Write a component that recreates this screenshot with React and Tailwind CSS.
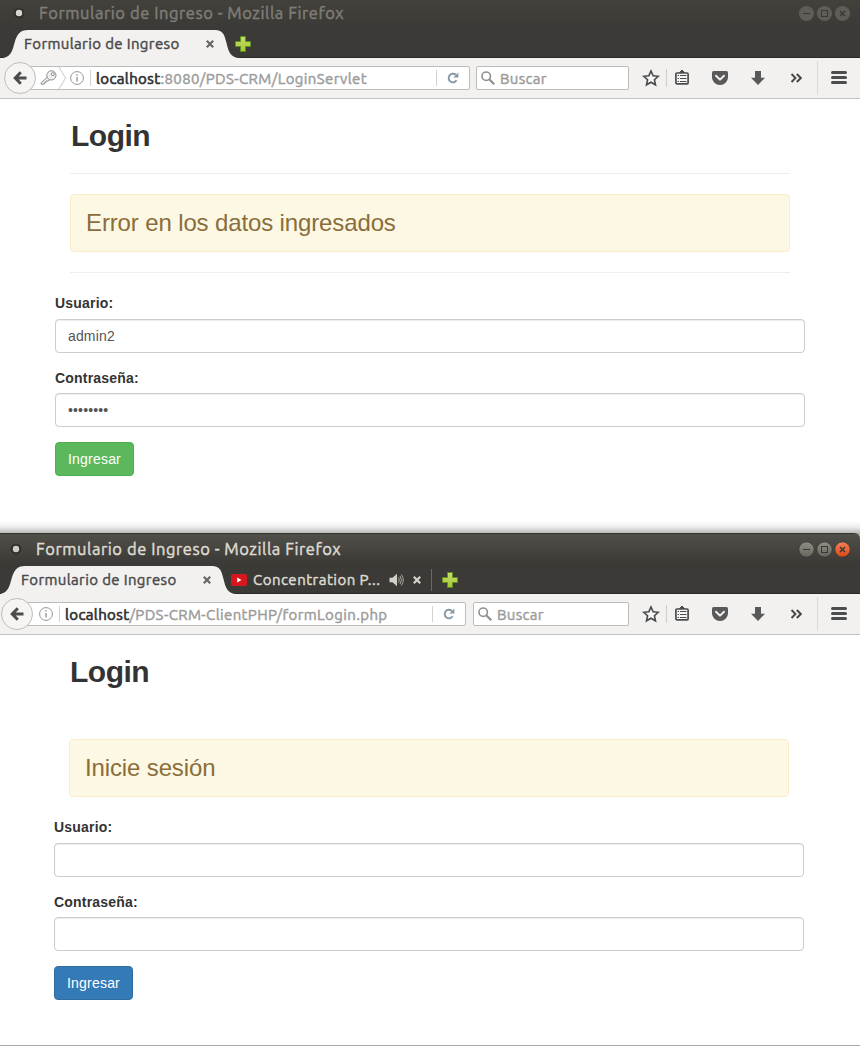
import React from "react";

const UI = "font-['Ubuntu','Noto_Sans',sans-serif]";
const MEDIUM = "[-webkit-text-stroke:0.45px]";

function Fit({ children, className, width }) {
  return (
    <span className={`block shrink-0 overflow-visible whitespace-nowrap ${className}`} style={{ width }}>
      {children}
    </span>
  );
}

function WindowButtons({ active }) {
  const fill = active ? "url(#btnGray)" : "#5f5d57";
  return (
    <svg width="54" height="20" viewBox="0 0 54 20" className="shrink-0">
      <defs>
        <linearGradient id="btnGray" x1="0" y1="0" x2="0" y2="1">
          <stop offset="0" stopColor="#918f85" />
          <stop offset="1" stopColor="#66645c" />
        </linearGradient>
        <linearGradient id="btnRed" x1="0" y1="0" x2="0" y2="1">
          <stop offset="0" stopColor="#f4805a" />
          <stop offset="1" stopColor="#dd4814" />
        </linearGradient>
      </defs>
      <g stroke={active ? "#33322e" : "none"} strokeWidth="0.6">
        <circle cx="8.5" cy="10.5" r="7.6" fill={fill} />
        <circle cx="26.5" cy="10.5" r="7.6" fill={fill} />
        <circle cx="44.5" cy="10.5" r="7.6" fill={active ? "url(#btnRed)" : fill} />
      </g>
      <g fill="none" stroke="#3a3935" strokeWidth="1">
        <path d="M5 10.5h7" />
        <rect x="23.5" y="7.5" width="6" height="6" />
        <path d="M42 8l5 5M47 8l-5 5" strokeWidth="1.5" />
      </g>
    </svg>
  );
}

function CloseIcon({ color }) {
  return (
    <svg width="10" height="10" viewBox="0 0 10 10" className="shrink-0">
      <path d="M1.8 1.8l6.4 6.4M8.2 1.8L1.8 8.2" stroke={color} strokeWidth="2.2" fill="none" />
    </svg>
  );
}

function PlusIcon() {
  return (
    <svg width="16" height="16" viewBox="0 0 16 16" className="shrink-0">
      <defs>
        <linearGradient id="plus" x1="0" y1="0" x2="0" y2="1">
          <stop offset="0" stopColor="#c5de6b" />
          <stop offset="1" stopColor="#a5c733" />
        </linearGradient>
      </defs>
      <path d="M5.5.5h5v5h5v5h-5v5h-5v-5h-5v-5h5z" fill="url(#plus)" stroke="#5f8f22" />
    </svg>
  );
}

function TabShape() {
  return (
    <svg width="238" height="28" viewBox="0 0 238 28" className="absolute left-0 top-0">
      <path
        d="M-3 28C7 28 8.500 20 10.500 13C13 4 16 0 24 0H211C219 0 220.500 5 222.500 13C224.500 21 226 28 236 28Z"
        fill="#f2f1f0"
      />
    </svg>
  );
}

function KeyIcon() {
  return (
    <svg width="18" height="16" viewBox="0 0 18 16" className="shrink-0">
      <g fill="#f0f0f0" stroke="#8c8c8c" strokeWidth="1" strokeLinejoin="round">
        <path d="M7.600 7L1.200 12.600v1.600h3v-1.500h1.800v-1.600h2l2-1.600z" />
        <circle cx="11.400" cy="5.400" r="4.600" />
        <circle cx="12.800" cy="4.200" r="1.500" fill="#fff" />
      </g>
    </svg>
  );
}

function InfoIcon() {
  return (
    <svg width="14" height="14" viewBox="0 0 14 14" className="shrink-0">
      <circle cx="7" cy="7" r="6.400" fill="none" stroke="#969696" />
      <path d="M7 6v4.600M7 3.200v1.600" stroke="#969696" strokeWidth="1.400" />
    </svg>
  );
}

function ReloadIcon() {
  return (
    <svg width="12" height="12" viewBox="0 0 12 12" className="shrink-0">
      <path d="M9.600 8.300A4.300 4.300 0 1 1 8.900 2.900" fill="none" stroke="#8798a5" strokeWidth="1.900" />
      <path d="M11.400.4v5.100H6.300z" fill="#8798a5" />
    </svg>
  );
}

function SearchIcon() {
  return (
    <svg width="14" height="14" viewBox="0 0 14 14" className="shrink-0">
      <circle cx="5.200" cy="5.200" r="4.200" fill="none" stroke="#8f8f8f" strokeWidth="1.600" />
      <path d="M8.200 8.200l5 5" stroke="#8f8f8f" strokeWidth="2.200" />
    </svg>
  );
}

function Toolbar() {
  return (
    <div className="flex h-full items-center">
      <div className="flex w-[37px] items-center justify-center pl-[7px]">
        <svg width="18" height="18" viewBox="0 0 18 18">
          <path
            d="M9 2l2.100 4.700 5.100.6-3.800 3.400 1.100 5.100L9 13.200l-4.500 2.600 1.100-5.100L1.800 7.300l5.100-.6z"
            fill="#f6f6f6"
            stroke="#4a4a4a"
            strokeWidth="1.600"
          />
        </svg>
      </div>
      <div className="h-[18px] w-px bg-[#cfcdcb]" />
      <div className="flex w-[30px] items-center justify-center pb-[2px]">
        <svg width="14" height="16" viewBox="0 0 14 16">
          <path d="M4.300 3.700L7 1l2.700 2.700z" fill="#4c4c4c" stroke="#4c4c4c" />
          <rect x="0.900" y="4" width="12.200" height="10.800" rx="1" fill="#f5f5f5" stroke="#4c4c4c" strokeWidth="1.700" />
          <path
            d="M2.600 6.500h1.400M5 6.500H11.500M2.600 9.500h1.400M5 9.500H11.500M2.600 12.500h1.400M5 12.500H11.500"
            stroke="#4c4c4c"
            strokeWidth="1"
          />
        </svg>
      </div>
      <div className="flex w-[46px] items-center justify-center">
        <svg width="16" height="14" viewBox="0 0 16 14">
          <path d="M1.500 0h13q1.500 0 1.500 1.500V6.200a8 7.800 0 0 1-16 0V1.500Q0 0 1.500 0z" fill="#595959" />
          <path d="M4 4.800l4 3.800 4-3.800" fill="none" stroke="#f4f4f4" strokeWidth="2" strokeLinecap="round" strokeLinejoin="round" />
        </svg>
      </div>
      <div className="flex w-[30px] items-center justify-center">
        <svg width="14" height="14" viewBox="0 0 14 14">
          <path d="M4 0h6v6.800H14L7 14 0 6.800h4z" fill="#595959" />
        </svg>
      </div>
      <div className="flex w-[46px] items-center justify-center">
        <svg width="12" height="10" viewBox="0 0 12 10">
          <path d="M1.500 1l4 4-4 4M6.800 1l4 4-4 4" fill="none" stroke="#464646" strokeWidth="1.900" />
        </svg>
      </div>
      <div className="ml-[-2px] h-[34px] w-px bg-[#dcdad8]" />
      <div className="ml-[13px] flex w-4 flex-col gap-[2px] pb-px">
        <div className="h-[3px] rounded-sm bg-[#4d4d4d]" />
        <div className="h-[3px] rounded-sm bg-[#4d4d4d]" />
        <div className="h-[3px] rounded-sm bg-[#4d4d4d]" />
      </div>
    </div>
  );
}

function TitleBar({ active }) {
  return (
    <div
      className={`flex shrink-0 items-center justify-between pr-2 ${active ? "h-8 pb-[2px] pl-[10px]" : "h-[30px] pb-[4px] pl-[13px]"}`}
    >
      <div className="flex items-center">
        <svg width="12" height="12" viewBox="0 0 12 12" className="mr-[14px]">
          <circle cx="6" cy="6" r="5.400" fill="#32312d" />
          <circle cx="6" cy="6" r="3.200" fill={active ? "#cfcdc6" : "#d8d6d0"} />
        </svg>
        <Fit
          width={306}
          className={`${UI} ${MEDIUM} text-[16.5px] leading-5 tracking-[0.560px] ${active ? "text-[#dfdbd2]" : "text-[#807d78]"}`}
        >
          Formulario de Ingreso - Mozilla Firefox
        </Fit>
      </div>
      <WindowButtons active={active} />
    </div>
  );
}

function TabStrip({ active }) {
  return (
    <div className={`flex h-7 shrink-0 items-center ${active ? "pl-[1px]" : "pl-1"}`}>
      <div className="relative h-7 w-[230px] shrink-0">
        <TabShape />
        <div className="relative flex h-full items-center pl-5">
          <Fit width={181} className={`${UI} ${MEDIUM} text-[15px] leading-5 tracking-[0.370px] text-[#4a4a4a]`}>
            Formulario de Ingreso
          </Fit>
          <CloseIcon color="#666" />
        </div>
      </div>
      {active && (
        <div className="flex items-center">
          <svg width="16" height="12" viewBox="0 0 16 12" className="shrink-0">
            <rect width="16" height="12" rx="2.500" fill="#d8171c" />
            <path d="M6.200 3.500v5l4.300-2.500z" fill="#fff" />
          </svg>
          <Fit width={135} className={`${UI} ${MEDIUM} ml-[6px] text-[15px] leading-5 tracking-[0.480px] text-[#dfdbd2]`}>
            Concentration P...
          </Fit>
          <svg width="15" height="14" viewBox="0 0 15 14" className="mr-2 ml-[1px] shrink-0">
            <path d="M.5 4.700h3L8 .8v12.400L3.500 9.300h-3z" fill="#d4d0c8" />
            <path d="M9.500 4.500q1.700 2.500 0 5M11 3q3 4 0 8M12.300 1.500q4 5.500 0 11" fill="none" stroke="#aaa79f" strokeWidth="1" />
          </svg>
          <CloseIcon color="#d8d5cd" />
          <div className="ml-[9px] h-[22px] w-px bg-[#6b6963]" />
        </div>
      )}
      <div className={active ? "ml-[10px]" : "ml-[1px]"}>
        <PlusIcon />
      </div>
    </div>
  );
}

function NavBar({ active, host, path }) {
  return (
    <div className="flex h-[41px] shrink-0 items-center border-b border-[#c3c0bc] bg-[#f2f1f0]">
      <div
        className={`relative z-10 flex h-8 w-8 shrink-0 items-center justify-center rounded-full border border-[#c0bdb9] bg-[#f6f5f4] ${active ? "ml-[1px]" : "ml-1"}`}
      >
        <svg width="14" height="14" viewBox="0 0 14 14">
          <path d="M7.800 1.200L2.200 7l5.600 5.800M2.500 7H13.500" fill="none" stroke="#4c4c4c" strokeWidth="3" />
        </svg>
      </div>
      <div
        className={`-ml-[6px] flex h-6 shrink-0 items-center rounded-r-[2px] border border-[#bfbcb8] bg-white ${active ? "w-[439px] pl-[11px]" : "w-[440px] pl-[9px]"}`}
      >
        {!active && (
          <>
            <KeyIcon />
            <svg width="9" height="22" viewBox="0 0 9 22" className="mr-[3px] shrink-0">
              <path d="M1 0l6.500 11L1 22" fill="none" stroke="#c8c8c8" />
            </svg>
          </>
        )}
        <InfoIcon />
        <div className="mr-[5px] ml-[6px] h-4 w-px shrink-0 bg-[#d2d2d2]" />
        <span className={`${UI} grow whitespace-nowrap pt-[2px] text-[15px] leading-5 tracking-[0.375px] text-[#9b9b9b]`}>
          <span className="text-[#333] [-webkit-text-stroke:0.7px]">{host}</span>
          <span className={MEDIUM}>{path}</span>
        </span>
        <div className="mr-[10px] h-4 w-px shrink-0 bg-[#d2d2d2]" />
        <ReloadIcon />
        <div className="w-[10px] shrink-0" />
      </div>
      <div
        className={`flex h-6 shrink-0 items-center rounded-[2px] border border-[#bfbcb8] bg-white pl-1 ${active ? "ml-[7px] w-[156px]" : "ml-[6px] w-[153px]"}`}
      >
        <SearchIcon />
        <span className={`${UI} ${MEDIUM} ml-[5px] pt-[2px] text-[15px] leading-5 tracking-[0.320px] text-[#9b9b9b]`}>Buscar</span>
      </div>
      <Toolbar />
    </div>
  );
}

function Field({ label, children }) {
  return (
    <div className="mb-[15px]">
      <div className="mb-[5px] text-[14px] font-bold leading-5 tracking-[0.200px] text-[#333]">{label}</div>
      <div className="flex h-[34px] items-center rounded border border-[#ccc] bg-white px-3 text-[14px] leading-5 tracking-[0.150px] text-[#555] shadow-[inset_0_1px_1px_rgba(0,0,0,0.075)]">
        {children}
      </div>
    </div>
  );
}

function FirstField({ label, children }) {
  return (
    <div className="-mt-px [&>div>div:first-child]:mb-[6px]">
      <Field label={label}>{children}</Field>
    </div>
  );
}

function Heading({ className }) {
  return <h2 className={`pl-px text-[30px] font-bold leading-[34px] tracking-[-0.500px] text-[#333] ${className}`}>Login</h2>;
}

function Alert({ children }) {
  return (
    <div className="flex h-[58px] items-center rounded border border-[#faebcc] bg-[#fcf8e3] px-[15px] text-[24px] leading-[26px] tracking-[-0.130px] text-[#8a6d3b]">
      {children}
    </div>
  );
}

function SubmitButton({ className }) {
  return (
    <button className={`h-[34px] w-[79px] rounded border text-[14px] tracking-[0.200px] text-white ${className}`}>Ingresar</button>
  );
}

const PAGE = "font-['Liberation_Sans',Arial,sans-serif]";

export default function App() {
  return (
    <div className="flex h-[1046px] w-[860px] flex-col overflow-hidden bg-white">
      <section className="flex h-[533px] flex-col">
        <header className="flex h-[58px] shrink-0 flex-col border-b border-[#2b2a27] bg-linear-to-b from-[#42413c] to-[#3b3a36] to-50%">
          <TitleBar />
          <TabStrip />
        </header>
        <NavBar host="localhost" path=":8080/PDS-CRM/LoginServlet" />
        <main className={`${PAGE} grow px-[55px] pt-5`}>
          <div className="px-[15px]">
            <Heading className="mb-5" />
            <hr className="mb-5 border-[#eee]" />
            <Alert>Error en los datos ingresados</Alert>
            <hr className="mt-5 mb-[21px] border-[#eee]" />
          </div>
          <FirstField label="Usuario:">admin2</FirstField>
          <Field label="Contraseña:">••••••••</Field>
          <SubmitButton className="border-[#4cae4c] bg-[#5cb85c]" />
        </main>
        <div className="h-3 shrink-0 bg-linear-to-b from-white via-[#ececec] to-[#bcbcbc]" />
      </section>
      <section className="flex h-[513px] flex-col bg-linear-to-b from-[#a8a8a8] to-white to-2%">
        <header className="flex h-[61px] shrink-0 flex-col rounded-tr-[6px] border-t border-b border-t-[#35342f] border-b-[#2b2a27] bg-linear-to-b from-[#504f49] to-[#3b3a36] to-50%">
          <TitleBar active />
          <TabStrip active />
        </header>
        <NavBar active host="localhost" path="/PDS-CRM-ClientPHP/formLogin.php" />
        <main className={`${PAGE} grow border-b border-[#aaa] bg-white pt-5 pr-14 pl-[54px]`}>
          <div className="px-[15px]">
            <Heading className="mb-[50px]" />
            <Alert>Inicie sesión</Alert>
          </div>
          <div className="mt-[21px]">
            <FirstField label="Usuario:" />
            <Field label="Contraseña:" />
          </div>
          <SubmitButton className="border-[#2e6da4] bg-[#337ab7]" />
        </main>
      </section>
    </div>
  );
}
